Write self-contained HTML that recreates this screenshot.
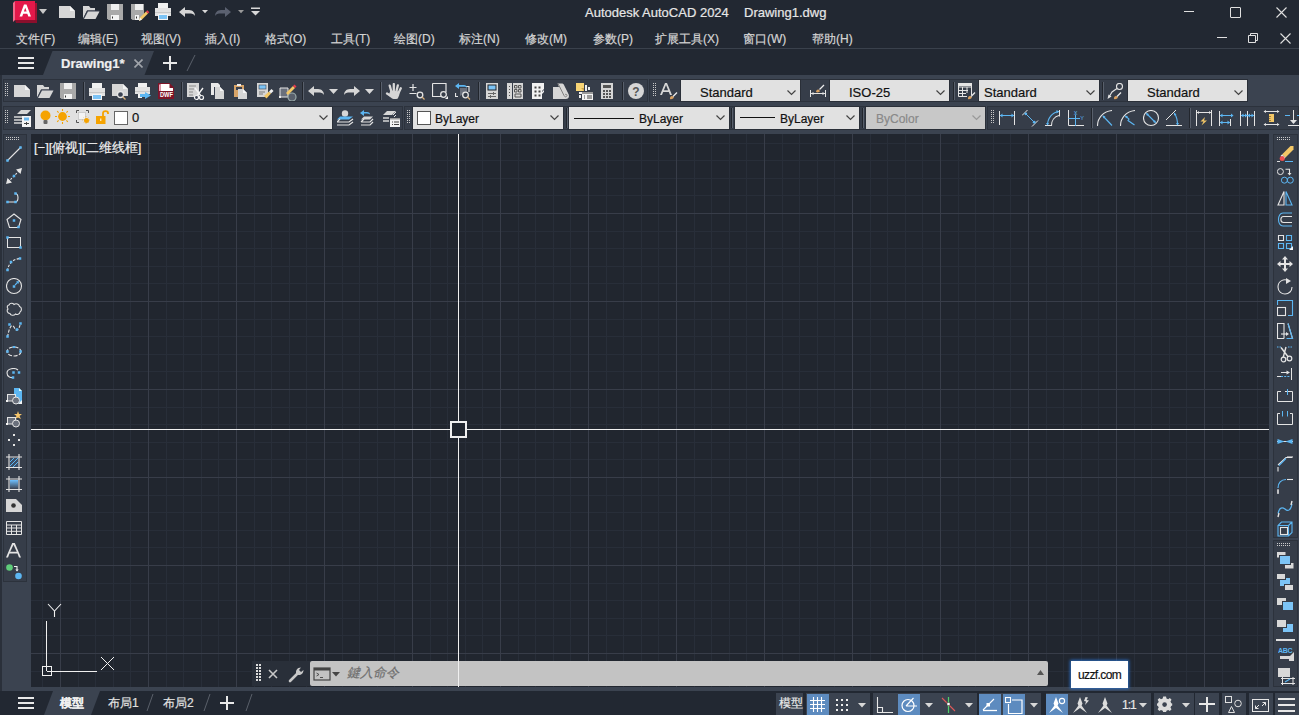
<!DOCTYPE html><html><head><meta charset="utf-8"><style>
html,body{margin:0;padding:0;width:1299px;height:715px;overflow:hidden;background:#222832;font-family:"Liberation Sans",sans-serif}
body>div,body>span,body>svg{position:absolute;display:block}
span{white-space:nowrap;line-height:1.15;-webkit-text-stroke:0.2px currentColor}
</style></head><body>
<svg style="left:12px;top:0px;" width="30" height="26" viewBox="0 0 30 26"><path d="M1 3 L3 1 L3 20 L1 22Z" fill="#f06a8a"/><rect x="3" y="1" width="20" height="19" fill="#e4184a"/><path d="M3 20 L23 20 L25 18 L25 23 L4 23Z" fill="#8a0f2c"/><rect x="23" y="3" width="2" height="17" fill="#9e1232"/><path d="M7.5 16.5 L12 4.5 L14.5 4.5 L19 16.5 L16.3 16.5 L15.3 13.8 L11.2 13.8 L10.2 16.5Z M11.9 11.6 L14.6 11.6 L13.25 7.8Z" fill="#fff"/></svg>
<svg style="left:39px;top:9px;" width="10" height="6" viewBox="0 0 10 6"><path d="M0 0 L8 0 L4 5Z" fill="#c8c8c8"/></svg>
<span style="left:585px;top:6px;font-size:13px;color:#e6e6e6;">Autodesk AutoCAD 2024</span>
<span style="left:744px;top:6px;font-size:13px;color:#e6e6e6;">Drawing1.dwg</span>
<div style="left:1184px;top:11px;width:10px;height:1px;background:#e0e0e0;"></div>
<div style="left:1230px;top:7px;width:11px;height:11px;background:transparent;border:1px solid #e0e0e0;box-sizing:border-box;border-radius:1px"></div>
<svg style="left:1276px;top:7px;" width="11" height="11" viewBox="0 0 11 11"><path d="M0.5 0.5 L10.5 10.5 M10.5 0.5 L0.5 10.5" stroke="#e0e0e0" stroke-width="1.1"/></svg>
<span style="left:16px;top:33px;font-size:12px;color:#d4d4d4;">文件(F)</span>
<span style="left:78px;top:33px;font-size:12px;color:#d4d4d4;">编辑(E)</span>
<span style="left:141px;top:33px;font-size:12px;color:#d4d4d4;">视图(V)</span>
<span style="left:205px;top:33px;font-size:12px;color:#d4d4d4;">插入(I)</span>
<span style="left:265px;top:33px;font-size:12px;color:#d4d4d4;">格式(O)</span>
<span style="left:331px;top:33px;font-size:12px;color:#d4d4d4;">工具(T)</span>
<span style="left:394px;top:33px;font-size:12px;color:#d4d4d4;">绘图(D)</span>
<span style="left:459px;top:33px;font-size:12px;color:#d4d4d4;">标注(N)</span>
<span style="left:525px;top:33px;font-size:12px;color:#d4d4d4;">修改(M)</span>
<span style="left:593px;top:33px;font-size:12px;color:#d4d4d4;">参数(P)</span>
<span style="left:655px;top:33px;font-size:12px;color:#d4d4d4;">扩展工具(X)</span>
<span style="left:743px;top:33px;font-size:12px;color:#d4d4d4;">窗口(W)</span>
<span style="left:812px;top:33px;font-size:12px;color:#d4d4d4;">帮助(H)</span>
<div style="left:1217px;top:37px;width:10px;height:1px;background:#e0e0e0;"></div>
<svg style="left:1246px;top:32px;" width="12" height="12" viewBox="0 0 12 12"><path d="M2.5 3.5 h7 v7 h-7z M4.5 3.5 v-2 h7 v7 h-2" fill="none" stroke="#e0e0e0" stroke-width="1"/></svg>
<svg style="left:1280px;top:33px;" width="11" height="11" viewBox="0 0 11 11"><path d="M0.5 0.5 L10.5 10.5 M10.5 0.5 L0.5 10.5" stroke="#e0e0e0" stroke-width="1.1"/></svg>
<div style="left:0px;top:48px;width:1299px;height:1px;background:#3a414c;"></div>
<div style="left:18px;top:57px;width:16px;height:2px;background:#e8e8e8;"></div>
<div style="left:18px;top:62px;width:16px;height:2px;background:#e8e8e8;"></div>
<div style="left:18px;top:67px;width:16px;height:2px;background:#e8e8e8;"></div>
<svg style="left:0px;top:49px;" width="1299" height="27" viewBox="0 0 1299 27"><path d="M43 26 L52.5 2 L154 2 L144.5 26Z" fill="#3b4350"/></svg>
<span style="left:61px;top:57px;font-size:13px;color:#f0f0f0;font-weight:bold">Drawing1*</span>
<svg style="left:134px;top:59px;" width="9" height="9" viewBox="0 0 9 9"><path d="M0.5 0.5 L8.5 8.5 M8.5 0.5 L0.5 8.5" stroke="#a0a4aa" stroke-width="1.6"/></svg>
<div style="left:163px;top:62px;width:14px;height:2px;background:#e8e8e8;"></div>
<div style="left:169px;top:56px;width:2px;height:14px;background:#e8e8e8;"></div>
<svg style="left:186px;top:54px;" width="10" height="18" viewBox="0 0 10 18"><path d="M1 17 L9 1" stroke="#5a606a" stroke-width="1"/></svg>
<div style="left:0px;top:75px;width:1299px;height:59px;background:#3b4350;"></div>
<div style="left:0px;top:75px;width:2px;height:640px;background:#2a303a;"></div>
<div style="left:3px;top:79px;width:645px;height:23px;background:#363d49;border:1px solid #2c323c;box-sizing:border-box"></div>
<div style="left:649px;top:79px;width:599px;height:23px;background:#363d49;border:1px solid #2c323c;box-sizing:border-box"></div>
<div style="left:3px;top:106px;width:400px;height:24px;background:#363d49;border:1px solid #2c323c;box-sizing:border-box"></div>
<div style="left:404px;top:106px;width:582px;height:24px;background:#363d49;border:1px solid #2c323c;box-sizing:border-box"></div>
<div style="left:987px;top:106px;width:312px;height:24px;background:#363d49;border:1px solid #2c323c;box-sizing:border-box"></div>
<div style="left:680px;top:79px;width:121px;height:23px;background:#e1e1e1;border:1px solid #2a2f38;box-sizing:border-box"></div>
<span style="left:700px;top:86px;font-size:13px;color:#111;">Standard</span>
<svg style="left:787px;top:90px;" width="10" height="6" viewBox="0 0 10 6"><path d="M0.5 0.5 L4.5 4.5 L8.5 0.5" fill="none" stroke="#444" stroke-width="1.2"/></svg>
<div style="left:829px;top:79px;width:121px;height:23px;background:#e1e1e1;border:1px solid #2a2f38;box-sizing:border-box"></div>
<span style="left:849px;top:86px;font-size:13px;color:#111;">ISO-25</span>
<svg style="left:936px;top:90px;" width="10" height="6" viewBox="0 0 10 6"><path d="M0.5 0.5 L4.5 4.5 L8.5 0.5" fill="none" stroke="#444" stroke-width="1.2"/></svg>
<div style="left:978px;top:79px;width:122px;height:23px;background:#e1e1e1;border:1px solid #2a2f38;box-sizing:border-box"></div>
<span style="left:984px;top:86px;font-size:13px;color:#111;">Standard</span>
<svg style="left:1086px;top:90px;" width="10" height="6" viewBox="0 0 10 6"><path d="M0.5 0.5 L4.5 4.5 L8.5 0.5" fill="none" stroke="#444" stroke-width="1.2"/></svg>
<div style="left:1127px;top:79px;width:121px;height:23px;background:#e1e1e1;border:1px solid #2a2f38;box-sizing:border-box"></div>
<span style="left:1147px;top:86px;font-size:13px;color:#111;">Standard</span>
<svg style="left:1234px;top:90px;" width="10" height="6" viewBox="0 0 10 6"><path d="M0.5 0.5 L4.5 4.5 L8.5 0.5" fill="none" stroke="#444" stroke-width="1.2"/></svg>
<div style="left:34px;top:106px;width:299px;height:24px;background:#e1e1e1;border:1px solid #2a2f38;box-sizing:border-box"></div>
<svg style="left:319px;top:115px;" width="10" height="6" viewBox="0 0 10 6"><path d="M0.5 0.5 L4.5 4.5 L8.5 0.5" fill="none" stroke="#444" stroke-width="1.2"/></svg>
<span style="left:132px;top:111px;font-size:13px;color:#111;">0</span>
<div style="left:114px;top:111px;width:14px;height:14px;background:#fff;border:1px solid #666;box-sizing:border-box"></div>
<div style="left:412px;top:106px;width:152px;height:24px;background:#e1e1e1;border:1px solid #2a2f38;box-sizing:border-box"></div>
<span style="left:435px;top:113px;font-size:12px;color:#111;">ByLayer</span>
<svg style="left:550px;top:115px;" width="10" height="6" viewBox="0 0 10 6"><path d="M0.5 0.5 L4.5 4.5 L8.5 0.5" fill="none" stroke="#444" stroke-width="1.2"/></svg>
<div style="left:417px;top:111px;width:14px;height:14px;background:#fff;border:1px solid #555;box-sizing:border-box"></div>
<div style="left:568px;top:106px;width:162px;height:24px;background:#e1e1e1;border:1px solid #2a2f38;box-sizing:border-box"></div>
<span style="left:639px;top:113px;font-size:12px;color:#111;">ByLayer</span>
<svg style="left:716px;top:115px;" width="10" height="6" viewBox="0 0 10 6"><path d="M0.5 0.5 L4.5 4.5 L8.5 0.5" fill="none" stroke="#444" stroke-width="1.2"/></svg>
<div style="left:574px;top:118px;width:60px;height:1px;background:#111;"></div>
<div style="left:734px;top:106px;width:126px;height:24px;background:#e1e1e1;border:1px solid #2a2f38;box-sizing:border-box"></div>
<span style="left:780px;top:113px;font-size:12px;color:#111;">ByLayer</span>
<svg style="left:846px;top:115px;" width="10" height="6" viewBox="0 0 10 6"><path d="M0.5 0.5 L4.5 4.5 L8.5 0.5" fill="none" stroke="#444" stroke-width="1.2"/></svg>
<div style="left:740px;top:117px;width:35px;height:1px;background:#111;"></div>
<div style="left:865px;top:106px;width:121px;height:24px;background:#c8c8c8;border:1px solid #2a2f38;box-sizing:border-box"></div>
<span style="left:876px;top:113px;font-size:12px;color:#888;">ByColor</span>
<svg style="left:972px;top:115px;" width="10" height="6" viewBox="0 0 10 6"><path d="M0.5 0.5 L4.5 4.5 L8.5 0.5" fill="none" stroke="#999" stroke-width="1.2"/></svg>
<div style="left:2px;top:134px;width:29px;height:556px;background:#3b4350;"></div>
<div style="left:1269px;top:134px;width:30px;height:556px;background:#3b4350;"></div>
<div style="left:2px;top:687px;width:1299px;height:4px;background:#3b4350;"></div>
<div style="left:3px;top:134px;width:24px;height:448px;background:#363d49;border:1px solid #2c323c;box-sizing:border-box"></div>
<div style="left:1273px;top:134px;width:25px;height:404px;background:#363d49;border:1px solid #2c323c;box-sizing:border-box"></div>
<div style="left:1273px;top:540px;width:25px;height:147px;background:#363d49;border:1px solid #2c323c;box-sizing:border-box"></div>
<div style="left:31px;top:134px;width:1238px;height:553px;background:#21262f;"></div>
<svg style="left:31px;top:134px;" width="1238" height="553" viewBox="0 0 1238 553"><rect x="11" y="0" width="1" height="553" fill="#282e39"/><rect x="47" y="0" width="1" height="553" fill="#282e39"/><rect x="64" y="0" width="1" height="553" fill="#282e39"/><rect x="82" y="0" width="1" height="553" fill="#282e39"/><rect x="99" y="0" width="1" height="553" fill="#282e39"/><rect x="135" y="0" width="1" height="553" fill="#282e39"/><rect x="152" y="0" width="1" height="553" fill="#282e39"/><rect x="170" y="0" width="1" height="553" fill="#282e39"/><rect x="187" y="0" width="1" height="553" fill="#282e39"/><rect x="223" y="0" width="1" height="553" fill="#282e39"/><rect x="240" y="0" width="1" height="553" fill="#282e39"/><rect x="258" y="0" width="1" height="553" fill="#282e39"/><rect x="275" y="0" width="1" height="553" fill="#282e39"/><rect x="311" y="0" width="1" height="553" fill="#282e39"/><rect x="328" y="0" width="1" height="553" fill="#282e39"/><rect x="346" y="0" width="1" height="553" fill="#282e39"/><rect x="363" y="0" width="1" height="553" fill="#282e39"/><rect x="399" y="0" width="1" height="553" fill="#282e39"/><rect x="416" y="0" width="1" height="553" fill="#282e39"/><rect x="434" y="0" width="1" height="553" fill="#282e39"/><rect x="451" y="0" width="1" height="553" fill="#282e39"/><rect x="487" y="0" width="1" height="553" fill="#282e39"/><rect x="504" y="0" width="1" height="553" fill="#282e39"/><rect x="522" y="0" width="1" height="553" fill="#282e39"/><rect x="539" y="0" width="1" height="553" fill="#282e39"/><rect x="575" y="0" width="1" height="553" fill="#282e39"/><rect x="592" y="0" width="1" height="553" fill="#282e39"/><rect x="610" y="0" width="1" height="553" fill="#282e39"/><rect x="627" y="0" width="1" height="553" fill="#282e39"/><rect x="663" y="0" width="1" height="553" fill="#282e39"/><rect x="680" y="0" width="1" height="553" fill="#282e39"/><rect x="698" y="0" width="1" height="553" fill="#282e39"/><rect x="715" y="0" width="1" height="553" fill="#282e39"/><rect x="751" y="0" width="1" height="553" fill="#282e39"/><rect x="768" y="0" width="1" height="553" fill="#282e39"/><rect x="786" y="0" width="1" height="553" fill="#282e39"/><rect x="803" y="0" width="1" height="553" fill="#282e39"/><rect x="839" y="0" width="1" height="553" fill="#282e39"/><rect x="856" y="0" width="1" height="553" fill="#282e39"/><rect x="874" y="0" width="1" height="553" fill="#282e39"/><rect x="891" y="0" width="1" height="553" fill="#282e39"/><rect x="927" y="0" width="1" height="553" fill="#282e39"/><rect x="944" y="0" width="1" height="553" fill="#282e39"/><rect x="962" y="0" width="1" height="553" fill="#282e39"/><rect x="979" y="0" width="1" height="553" fill="#282e39"/><rect x="1015" y="0" width="1" height="553" fill="#282e39"/><rect x="1032" y="0" width="1" height="553" fill="#282e39"/><rect x="1050" y="0" width="1" height="553" fill="#282e39"/><rect x="1067" y="0" width="1" height="553" fill="#282e39"/><rect x="1103" y="0" width="1" height="553" fill="#282e39"/><rect x="1120" y="0" width="1" height="553" fill="#282e39"/><rect x="1138" y="0" width="1" height="553" fill="#282e39"/><rect x="1155" y="0" width="1" height="553" fill="#282e39"/><rect x="1191" y="0" width="1" height="553" fill="#282e39"/><rect x="1208" y="0" width="1" height="553" fill="#282e39"/><rect x="1226" y="0" width="1" height="553" fill="#282e39"/><rect x="0" y="9" width="1238" height="1" fill="#282e39"/><rect x="0" y="26" width="1238" height="1" fill="#282e39"/><rect x="0" y="44" width="1238" height="1" fill="#282e39"/><rect x="0" y="61" width="1238" height="1" fill="#282e39"/><rect x="0" y="97" width="1238" height="1" fill="#282e39"/><rect x="0" y="114" width="1238" height="1" fill="#282e39"/><rect x="0" y="132" width="1238" height="1" fill="#282e39"/><rect x="0" y="149" width="1238" height="1" fill="#282e39"/><rect x="0" y="185" width="1238" height="1" fill="#282e39"/><rect x="0" y="202" width="1238" height="1" fill="#282e39"/><rect x="0" y="220" width="1238" height="1" fill="#282e39"/><rect x="0" y="237" width="1238" height="1" fill="#282e39"/><rect x="0" y="273" width="1238" height="1" fill="#282e39"/><rect x="0" y="290" width="1238" height="1" fill="#282e39"/><rect x="0" y="308" width="1238" height="1" fill="#282e39"/><rect x="0" y="325" width="1238" height="1" fill="#282e39"/><rect x="0" y="361" width="1238" height="1" fill="#282e39"/><rect x="0" y="378" width="1238" height="1" fill="#282e39"/><rect x="0" y="396" width="1238" height="1" fill="#282e39"/><rect x="0" y="413" width="1238" height="1" fill="#282e39"/><rect x="0" y="449" width="1238" height="1" fill="#282e39"/><rect x="0" y="466" width="1238" height="1" fill="#282e39"/><rect x="0" y="484" width="1238" height="1" fill="#282e39"/><rect x="0" y="501" width="1238" height="1" fill="#282e39"/><rect x="0" y="537" width="1238" height="1" fill="#282e39"/><rect x="29" y="0" width="1" height="553" fill="#383d49"/><rect x="117" y="0" width="1" height="553" fill="#383d49"/><rect x="205" y="0" width="1" height="553" fill="#383d49"/><rect x="293" y="0" width="1" height="553" fill="#383d49"/><rect x="381" y="0" width="1" height="553" fill="#383d49"/><rect x="469" y="0" width="1" height="553" fill="#383d49"/><rect x="557" y="0" width="1" height="553" fill="#383d49"/><rect x="645" y="0" width="1" height="553" fill="#383d49"/><rect x="733" y="0" width="1" height="553" fill="#383d49"/><rect x="821" y="0" width="1" height="553" fill="#383d49"/><rect x="909" y="0" width="1" height="553" fill="#383d49"/><rect x="997" y="0" width="1" height="553" fill="#383d49"/><rect x="1085" y="0" width="1" height="553" fill="#383d49"/><rect x="1173" y="0" width="1" height="553" fill="#383d49"/><rect x="0" y="79" width="1238" height="1" fill="#383d49"/><rect x="0" y="167" width="1238" height="1" fill="#383d49"/><rect x="0" y="255" width="1238" height="1" fill="#383d49"/><rect x="0" y="343" width="1238" height="1" fill="#383d49"/><rect x="0" y="431" width="1238" height="1" fill="#383d49"/><rect x="0" y="519" width="1238" height="1" fill="#383d49"/></svg>
<span style="left:34px;top:141px;font-size:13px;color:#f0f0f0;">[−][俯视][二维线框]</span>
<div style="left:46px;top:621px;width:1px;height:50px;background:#f0f0f0;"></div>
<div style="left:47px;top:671px;width:50px;height:1px;background:#f0f0f0;"></div>
<div style="left:42px;top:666px;width:10px;height:10px;background:transparent;border:1px solid #f0f0f0;box-sizing:border-box"></div>
<svg style="left:47px;top:603px;" width="15" height="15" viewBox="0 0 15 15"><path d="M1 1 L7.5 8 L14 1 M7.5 8 V14" fill="none" stroke="#f0f0f0" stroke-width="1.1"/></svg>
<svg style="left:100px;top:656px;" width="15" height="15" viewBox="0 0 15 15"><path d="M1 1 L14 14 M14 1 L1 14" fill="none" stroke="#f0f0f0" stroke-width="1"/></svg>
<div style="left:252px;top:661px;width:58px;height:25px;background:#292f39;"></div>
<div style="left:310px;top:661px;width:738px;height:25px;background:#c3c3c3;border-radius:2px"></div>
<span style="left:347px;top:666px;font-size:13px;color:#707070;font-style:italic">鍵入命令</span>
<svg style="left:255px;top:663px;" width="7" height="19" viewBox="0 0 7 19"><rect x="1" y="1" width="2" height="2" fill="#dcdcdc"/><rect x="1" y="4" width="2" height="2" fill="#dcdcdc"/><rect x="1" y="7" width="2" height="2" fill="#dcdcdc"/><rect x="1" y="10" width="2" height="2" fill="#dcdcdc"/><rect x="1" y="13" width="2" height="2" fill="#dcdcdc"/><rect x="1" y="16" width="2" height="2" fill="#dcdcdc"/><rect x="4" y="1" width="2" height="2" fill="#dcdcdc"/><rect x="4" y="4" width="2" height="2" fill="#dcdcdc"/><rect x="4" y="7" width="2" height="2" fill="#dcdcdc"/><rect x="4" y="10" width="2" height="2" fill="#dcdcdc"/><rect x="4" y="13" width="2" height="2" fill="#dcdcdc"/><rect x="4" y="16" width="2" height="2" fill="#dcdcdc"/></svg>
<svg style="left:268px;top:669px;" width="10" height="10" viewBox="0 0 10 10"><path d="M1 1 L9 9 M9 1 L1 9" stroke="#c8c8c8" stroke-width="1.6"/></svg>
<svg style="left:288px;top:666px;" width="17" height="17" viewBox="0 0 17 17"><path d="M2 15 L10 7" stroke="#c8c8c8" stroke-width="2.6" stroke-linecap="round"/><path d="M8.5 8.5 C7 5 9 1.5 13 1.5 L11 4 L13 6 L15.5 4 C15.5 8 12 10 8.5 8.5Z" fill="#c8c8c8"/></svg>
<svg style="left:313px;top:667px;" width="19" height="14" viewBox="0 0 19 14"><rect x="1" y="1" width="16" height="12" fill="none" stroke="#444" stroke-width="1.2"/><rect x="1" y="1" width="16" height="2.5" fill="#444"/><path d="M3.5 6 L6 7.5 L3.5 9 M7 10.5 H10" fill="none" stroke="#444" stroke-width="0.9"/></svg>
<svg style="left:332px;top:672px;" width="9" height="5" viewBox="0 0 9 5"><path d="M0 0 H8 L4 4.5Z" fill="#444"/></svg>
<svg style="left:1037px;top:670px;" width="8" height="6" viewBox="0 0 8 6"><path d="M0 5 L7 5 L3.5 0Z" fill="#555"/></svg>
<div style="left:1071px;top:661px;width:57px;height:27px;background:#fff;box-shadow:0 0 3px 1px #2a6cc0"></div>
<span style="left:1078px;top:669px;font-size:12px;color:#111;letter-spacing:-0.6px">uzzf.com</span>
<div style="left:0px;top:691px;width:1299px;height:24px;background:#222832;"></div>
<div style="left:18px;top:697px;width:16px;height:2px;background:#e8e8e8;"></div>
<div style="left:18px;top:702px;width:16px;height:2px;background:#e8e8e8;"></div>
<div style="left:18px;top:707px;width:16px;height:2px;background:#e8e8e8;"></div>
<svg style="left:0px;top:691px;" width="1299" height="24" viewBox="0 0 1299 24"><path d="M44 24 L53 0 L100 0 L91 24Z" fill="#3b4350"/></svg>
<span style="left:60px;top:697px;font-size:12px;color:#f0f0f0;font-weight:bold">模型</span>
<span style="left:108px;top:697px;font-size:12px;color:#e0e0e0;">布局1</span>
<span style="left:163px;top:697px;font-size:12px;color:#e0e0e0;">布局2</span>
<div style="left:220px;top:702px;width:14px;height:2px;background:#e8e8e8;"></div>
<div style="left:226px;top:696px;width:2px;height:14px;background:#e8e8e8;"></div>
<svg style="left:146px;top:693px;" width="8" height="19" viewBox="0 0 8 19"><path d="M1 18 L7 1" stroke="#5a606a" stroke-width="1"/></svg>
<svg style="left:203px;top:693px;" width="8" height="19" viewBox="0 0 8 19"><path d="M1 18 L7 1" stroke="#5a606a" stroke-width="1"/></svg>
<svg style="left:245px;top:693px;" width="8" height="19" viewBox="0 0 8 19"><path d="M1 18 L7 1" stroke="#5a606a" stroke-width="1"/></svg>
<div style="left:776px;top:693px;width:27px;height:22px;background:#3b4350;"></div>
<div style="left:806px;top:693px;width:64px;height:22px;background:#3b4350;"></div>
<div style="left:873px;top:693px;width:104px;height:22px;background:#3b4350;"></div>
<div style="left:979px;top:693px;width:62px;height:22px;background:#3b4350;"></div>
<div style="left:1046px;top:693px;width:105px;height:22px;background:#3b4350;"></div>
<div style="left:1154px;top:693px;width:40px;height:22px;background:#3b4350;"></div>
<div style="left:1195px;top:693px;width:24px;height:22px;background:#3b4350;"></div>
<div style="left:1222px;top:693px;width:24px;height:22px;background:#3b4350;"></div>
<div style="left:1249px;top:693px;width:24px;height:22px;background:#3b4350;"></div>
<div style="left:1275px;top:693px;width:24px;height:22px;background:#3b4350;"></div>
<div style="left:807px;top:694px;width:22px;height:21px;background:#5d8bbf;"></div>
<div style="left:898px;top:694px;width:22px;height:21px;background:#5d8bbf;"></div>
<div style="left:979px;top:694px;width:22px;height:21px;background:#5d8bbf;"></div>
<div style="left:1003px;top:694px;width:22px;height:21px;background:#5d8bbf;"></div>
<div style="left:1046px;top:694px;width:22px;height:21px;background:#5d8bbf;"></div>
<span style="left:779px;top:697px;font-size:12px;color:#e8e8e8;">模型</span>
<svg style="left:809px;top:696px;" width="18" height="17" viewBox="0 0 18 17"><path d="M4.5 1 V16 M8.5 1 V16 M12.5 1 V16 M1 4.5 H16 M1 8.5 H16 M1 12.5 H16" stroke="#fff" stroke-width="1.1"/></svg>
<svg style="left:835px;top:698px;" width="16" height="16" viewBox="0 0 16 16"><rect x="1" y="1" width="2" height="2" fill="#eee"/><rect x="1" y="6" width="2" height="2" fill="#eee"/><rect x="1" y="11" width="2" height="2" fill="#eee"/><rect x="6" y="1" width="2" height="2" fill="#eee"/><rect x="6" y="6" width="2" height="2" fill="#eee"/><rect x="6" y="11" width="2" height="2" fill="#eee"/><rect x="11" y="1" width="2" height="2" fill="#eee"/><rect x="11" y="6" width="2" height="2" fill="#eee"/><rect x="11" y="11" width="2" height="2" fill="#eee"/></svg>
<svg style="left:858px;top:703px;" width="9" height="5" viewBox="0 0 9 5"><path d="M0 0 H8 L4 4.5Z" fill="#d8d8d8"/></svg>
<svg style="left:876px;top:696px;" width="18" height="18" viewBox="0 0 18 18"><path d="M1.5 1 V16.5 H17 M1.5 11.5 H6.5 V16.5" fill="none" stroke="#e8e8e8" stroke-width="1.1"/></svg>
<svg style="left:900px;top:696px;" width="18" height="18" viewBox="0 0 18 18"><circle cx="8" cy="9.5" r="6" fill="none" stroke="#fff" stroke-width="1.2"/><path d="M6 10 H17 M6 10 L13.5 2" stroke="#fff" stroke-width="1.1"/></svg>
<svg style="left:925px;top:703px;" width="9" height="5" viewBox="0 0 9 5"><path d="M0 0 H8 L4 4.5Z" fill="#d8d8d8"/></svg>
<svg style="left:940px;top:696px;" width="17" height="18" viewBox="0 0 17 18"><path d="M8.5 1 V17" stroke="#4fd06a" stroke-width="1.2"/><path d="M2 2 L15 15" stroke="#e05a5a" stroke-width="1.1"/><rect x="7" y="6.5" width="3" height="3" fill="#fff" stroke="#333" stroke-width="0.5"/></svg>
<svg style="left:965px;top:703px;" width="9" height="5" viewBox="0 0 9 5"><path d="M0 0 H8 L4 4.5Z" fill="#d8d8d8"/></svg>
<svg style="left:981px;top:697px;" width="18" height="16" viewBox="0 0 18 16"><path d="M2 13 L13 2" stroke="#fff" stroke-width="1.1"/><path d="M2 13.5 H16" stroke="#fff" stroke-width="1.3"/><rect x="5.5" y="6" width="3.5" height="3.5" fill="#fff"/></svg>
<svg style="left:1005px;top:697px;" width="18" height="17" viewBox="0 0 18 17"><rect x="0.5" y="0.5" width="5" height="5" fill="none" stroke="#fff" stroke-width="1.1"/><path d="M7 3 H17 V16.5 H3.5 V7" fill="none" stroke="#fff" stroke-width="1.2"/></svg>
<svg style="left:1030px;top:703px;" width="9" height="5" viewBox="0 0 9 5"><path d="M0 0 H8 L4 4.5Z" fill="#d8d8d8"/></svg>
<svg style="left:1049px;top:697px;" width="20" height="17" viewBox="0 0 20 17"><path d="M7 0 L9.5 6.5 L8.6 8.5 L14 16 L7 11 L0 16 L5.4 8.5 L4.5 6.5Z" fill="#fff"/><circle cx="13" cy="4" r="2.6" fill="none" stroke="#fff" stroke-width="1.1"/></svg>
<svg style="left:1073px;top:697px;" width="20" height="17" viewBox="0 0 20 17"><path d="M7 0 L9.5 6.5 L8.6 8.5 L14 16 L7 11 L0 16 L5.4 8.5 L4.5 6.5Z" fill="#dcdcdc"/><path d="M12.5 0 L15 0.5 L13.5 3 L16 3.5 L12 8 L13 4.5 L11 4Z" fill="#dcdcdc"/></svg>
<svg style="left:1098px;top:697px;" width="18" height="17" viewBox="0 0 18 17"><path d="M7 0 L9.5 6.5 L8.6 8.5 L14 16 L7 11 L0 16 L5.4 8.5 L4.5 6.5Z" fill="#dcdcdc"/></svg>
<span style="left:1122px;top:699px;font-size:12px;color:#e8e8e8;letter-spacing:-1px">1:1</span>
<svg style="left:1139px;top:703px;" width="9" height="5" viewBox="0 0 9 5"><path d="M0 0 H8 L4 4.5Z" fill="#d8d8d8"/></svg>
<svg style="left:1157px;top:696px;" width="16" height="16" viewBox="0 0 16 16"><path d="M6.5 0.5 H9.5 L10 2.5 L11.8 3.3 L13.5 2.2 L15.3 4 L14.2 5.8 L15 7.6 L16 8 V10 L14.9 10.5 L14.2 12.2 L15.3 14 L13.5 15.8 L11.8 14.7 L10 15.5 L9.5 17 H6.5 L6 15.5 L4.2 14.7 L2.5 15.8 L0.7 14 L1.8 12.2 L1 10.5 L0 10 V8 L1 7.6 L1.8 5.8 L0.7 4 L2.5 2.2 L4.2 3.3 L6 2.5Z" transform="scale(0.95)" fill="#dcdcdc"/><circle cx="7.6" cy="8.6" r="2.3" fill="#3b4350"/></svg>
<svg style="left:1182px;top:703px;" width="9" height="5" viewBox="0 0 9 5"><path d="M0 0 H8 L4 4.5Z" fill="#d8d8d8"/></svg>
<div style="left:1199px;top:703px;width:16px;height:2px;background:#e8e8e8;"></div>
<div style="left:1206px;top:697px;width:2px;height:15px;background:#e8e8e8;"></div>
<svg style="left:1225px;top:696px;" width="20" height="18" viewBox="0 0 20 18"><rect x="0.5" y="0.5" width="6" height="6" fill="none" stroke="#e0e0e0" stroke-width="1"/><circle cx="13" cy="7.5" r="3.3" fill="none" stroke="#e0e0e0" stroke-width="1"/><path d="M3.5 16.5 L6.5 10.5 L9.5 16.5Z" fill="none" stroke="#e0e0e0" stroke-width="1"/></svg>
<svg style="left:1252px;top:699px;" width="18" height="14" viewBox="0 0 18 14"><rect x="0.5" y="0.5" width="16" height="12" fill="none" stroke="#e6e6e6" stroke-width="1"/><path d="M3.5 9.5 L7 6 M13.5 3.5 L10 7" stroke="#e6e6e6" stroke-width="1"/><path d="M3.5 9.5 V6.5 M3.5 9.5 H6.5 M13.5 3.5 V6.5 M13.5 3.5 H10.5" stroke="#e6e6e6" stroke-width="1"/></svg>
<div style="left:1278px;top:698px;width:17px;height:2px;background:#e8e8e8;"></div>
<div style="left:1278px;top:704px;width:17px;height:2px;background:#e8e8e8;"></div>
<div style="left:1278px;top:710px;width:17px;height:2px;background:#e8e8e8;"></div>
<svg style="left:59px;top:5px;" width="18" height="18" viewBox="0 0 18 18"><path d="M0 1 H11 L16 6 V13 H0Z" fill="#d6d6d6"/><path d="M11 1 L16 6 H11Z" fill="#f4f4f4"/></svg>
<svg style="left:83px;top:6px;" width="18" height="18" viewBox="0 0 18 18"><path d="M0 0 H6 L7.5 2 H12 V4.5 H4 L0 12.5Z" fill="#d6d6d6"/><path d="M4.2 4.5 H16.5 L12.3 13 H0Z" fill="#3a4150"/><path d="M5 5.5 H16.5 L12.5 13 H1Z" fill="#d6d6d6"/></svg>
<svg style="left:107px;top:4px;" width="17" height="17" viewBox="0 0 17 17"><path d="M0 0 H16 V16 H1.5 L0 14.5Z" fill="#a9a9a9"/><rect x="4" y="0" width="8" height="6" fill="#efefef"/><rect x="4" y="11" width="8" height="5" fill="#f4f4f4"/><rect x="5" y="12.5" width="1" height="2" fill="#333"/></svg>
<svg style="left:131px;top:4px;" width="19" height="19" viewBox="0 0 19 19"><path d="M0 0 H13 V10 L9 16 H1.5 L0 14.5Z" fill="#a9a9a9"/><rect x="4" y="0" width="8" height="6" fill="#efefef"/><rect x="4" y="11" width="4" height="5" fill="#f4f4f4"/><rect x="5" y="12.5" width="1" height="2" fill="#333"/><path d="M8 17 L9 13.5 L15 7.5 L17 9.5 L11 15.5Z" fill="#f3c766"/><path d="M15 7.5 L16.3 6.2 L18.3 8.2 L17 9.5Z" fill="#e8394d"/><path d="M8 17 L9 13.5 L11 15.5Z" fill="#f4f4f4"/></svg>
<svg style="left:155px;top:3px;" width="17" height="18" viewBox="0 0 17 18"><rect x="3" y="0" width="10" height="5" fill="#f0f0f0"/><path d="M0 5 H16 V13 H13 V11 H3 V13 H0Z" fill="#e2e2e2"/><rect x="0" y="9" width="16" height="1" fill="#c8c8c8"/><rect x="3" y="11" width="10" height="6" fill="#f4f4f4"/><rect x="4" y="12" width="8" height="4" fill="#7cc3f5"/></svg>
<svg style="left:179px;top:7px;" width="17" height="11" viewBox="0 0 17 11"><path d="M0 5 L6 0 V3 H10 C14 3 16 6 16 9 C15 7 13 6.5 10 6.5 H6 V10Z" fill="#d6d6d6"/></svg>
<svg style="left:202px;top:10px;" width="9" height="5" viewBox="0 0 9 5"><path d="M0 0 H6 L3.0 3.3000000000000003Z" fill="#d8d8d8"/></svg>
<svg style="left:215px;top:7px;" width="17" height="11" viewBox="0 0 17 11"><path d="M16 5 L10 0 V3 H6 C2 3 0 6 0 9 C1 7 3 6.5 6 6.5 H10 V10Z" fill="#5b6170"/></svg>
<svg style="left:238px;top:10px;" width="9" height="5" viewBox="0 0 9 5"><path d="M0 0 H6 L3.0 3.3000000000000003Z" fill="#9a9a9a"/></svg>
<svg style="left:251px;top:7px;" width="9" height="9" viewBox="0 0 9 9"><rect x="0" y="0.5" width="9" height="1.5" fill="#d8d8d8"/><path d="M0 4 H9 L4.5 8.5Z" fill="#d8d8d8"/></svg>
<svg style="left:5px;top:83px;" width="3" height="14" viewBox="0 0 3 14"><rect x="0" y="0" width="1" height="1" fill="#c9c9c9"/><rect x="2" y="0" width="1" height="1" fill="#c9c9c9"/><rect x="0" y="2" width="1" height="1" fill="#c9c9c9"/><rect x="2" y="2" width="1" height="1" fill="#c9c9c9"/><rect x="0" y="4" width="1" height="1" fill="#c9c9c9"/><rect x="2" y="4" width="1" height="1" fill="#c9c9c9"/><rect x="0" y="6" width="1" height="1" fill="#c9c9c9"/><rect x="2" y="6" width="1" height="1" fill="#c9c9c9"/><rect x="0" y="8" width="1" height="1" fill="#c9c9c9"/><rect x="2" y="8" width="1" height="1" fill="#c9c9c9"/><rect x="0" y="10" width="1" height="1" fill="#c9c9c9"/><rect x="2" y="10" width="1" height="1" fill="#c9c9c9"/><rect x="0" y="12" width="1" height="1" fill="#c9c9c9"/><rect x="2" y="12" width="1" height="1" fill="#c9c9c9"/></svg>
<svg style="left:14px;top:84px;" width="17" height="15" viewBox="0 0 17 15"><path d="M0 1 H11 L16 6 V13 H0Z" fill="#d6d6d6"/><path d="M11 1 L16 6 H11Z" fill="#f4f4f4"/></svg>
<svg style="left:37px;top:85px;" width="18" height="18" viewBox="0 0 18 18"><path d="M0 0 H6 L7.5 2 H12 V4.5 H4 L0 12.5Z" fill="#d6d6d6"/><path d="M4.2 4.5 H16.5 L12.3 13 H0Z" fill="#3a4150"/><path d="M5 5.5 H16.5 L12.5 13 H1Z" fill="#d6d6d6"/></svg>
<svg style="left:60px;top:83px;" width="18" height="18" viewBox="0 0 18 18"><path d="M0 0 H16 V16 H1.5 L0 14.5Z" fill="#a9a9a9"/><rect x="4" y="0" width="8" height="6" fill="#efefef"/><rect x="4" y="11" width="8" height="5" fill="#f4f4f4"/><rect x="5" y="12.5" width="1" height="2" fill="#333"/></svg>
<svg style="left:83px;top:82px;" width="2" height="18" viewBox="0 0 2 18"><rect x="0" y="0" width="1" height="18" fill="#22262d"/><rect x="1" y="0" width="1" height="18" fill="#59606c"/></svg>
<svg style="left:89px;top:83px;" width="18" height="18" viewBox="0 0 18 18"><rect x="3" y="0" width="10" height="5" fill="#f0f0f0"/><path d="M0 5 H16 V13 H13 V11 H3 V13 H0Z" fill="#e2e2e2"/><rect x="0" y="9" width="16" height="1" fill="#c8c8c8"/><rect x="3" y="11" width="10" height="6" fill="#f4f4f4"/><rect x="4" y="12" width="8" height="4" fill="#7cc3f5"/></svg>
<svg style="left:112px;top:83px;" width="18" height="18" viewBox="0 0 18 18"><path d="M0 1 H11 L16 6 V13 H0Z" fill="#d6d6d6"/><path d="M11 1 L16 6 H11Z" fill="#f4f4f4"/><circle cx="8.5" cy="11.5" r="3" fill="#3a4150" stroke="#e4e4e4" stroke-width="1.3"/><path d="M10.7 13.7 L13.5 16.5" stroke="#d9b07a" stroke-width="1.3"/></svg>
<svg style="left:135px;top:83px;" width="18" height="18" viewBox="0 0 18 18"><rect x="3" y="0" width="9" height="4" fill="#f0f0f0"/><path d="M0 4 H15 V11 H0Z" fill="#e2e2e2"/><rect x="0" y="8" width="15" height="1" fill="#c8c8c8"/><rect x="3" y="11" width="4" height="4" fill="#f4f4f4"/><path d="M5 11 H10 V9 L16 12.5 L10 16 V14 H5Z" fill="#5cb6f2"/></svg>
<svg style="left:158px;top:83px;" width="18" height="18" viewBox="0 0 18 18"><path d="M0 0 H11.5 L16 4.5 V16 H0Z" fill="#7d1427"/><path d="M2.5 1 H11.5 V5 H15 V8 H2.5Z" fill="#fff"/><rect x="1" y="1.5" width="1.5" height="6.5" fill="#f2a3b9"/><text x="2" y="14" font-size="6.4" font-weight="bold" fill="#fff" font-family="Liberation Sans" textLength="13" lengthAdjust="spacingAndGlyphs">DWF</text></svg>
<svg style="left:181px;top:82px;" width="2" height="18" viewBox="0 0 2 18"><rect x="0" y="0" width="1" height="18" fill="#22262d"/><rect x="1" y="0" width="1" height="18" fill="#59606c"/></svg>
<svg style="left:187px;top:83px;" width="18" height="18" viewBox="0 0 18 18"><rect x="0" y="0" width="12" height="14" fill="#d6d6d6"/><path d="M2 3 H9 M2 6 H7 M2 9 H6 M2 12 H6" stroke="#8a8a8a" stroke-width="1"/><path d="M8 5 L14 13 M16 5 L10 13" stroke="#f4f4f4" stroke-width="1.4"/><circle cx="9.5" cy="14.5" r="2" fill="#3a4150" stroke="#f4f4f4" stroke-width="1.2"/><circle cx="14.5" cy="14.5" r="2" fill="#3a4150" stroke="#f4f4f4" stroke-width="1.2"/></svg>
<svg style="left:211px;top:83px;" width="18" height="18" viewBox="0 0 18 18"><path d="M0 0 H7 L9 2 V12 H0Z" fill="#e9e9e9"/><path d="M3 4 H9 L13 8 V16 H3Z" fill="#3a4150"/><path d="M4 4 H9 L13 8 V16 H4Z" fill="#d6d6d6"/><path d="M9 4 L13 8 H9Z" fill="#f7f7f7"/></svg>
<svg style="left:234px;top:83px;" width="18" height="18" viewBox="0 0 18 18"><rect x="0" y="2" width="10" height="12" fill="#d8a468"/><rect x="2" y="4" width="6" height="3" fill="#3a4150"/><path d="M3 1 H7 V3 H3Z" fill="#f0f0f0"/><path d="M4 6 H9 L13 10 V16 H4Z" fill="#d6d6d6"/><path d="M9 6 L13 10 H9Z" fill="#f7f7f7"/></svg>
<svg style="left:257px;top:83px;" width="18" height="18" viewBox="0 0 18 18"><rect x="0" y="0" width="11" height="14" fill="#d6d6d6"/><rect x="2" y="2" width="7" height="4" fill="#7cc3f5" stroke="#3a4150" stroke-width="0.6"/><path d="M2 9 H8 M2 11 H6" stroke="#7a7a7a"/><path d="M7 13 L12 8.5 L14 10.5 L9.5 15.5Z" fill="#f3c766"/><path d="M12 8.5 L14.5 6 L16.5 8 L14 10.5Z" fill="#f0f0f0"/></svg>
<svg style="left:279px;top:83px;" width="18" height="18" viewBox="0 0 18 18"><path d="M1 5 H9 V14 H1Z" fill="#6a707c" stroke="#e4e4e4" stroke-width="1"/><circle cx="13" cy="14" r="4" fill="#59606c" stroke="#9aa" stroke-width="1.2"/><path d="M7 10 L14 3 L16 5 L9 12Z" fill="#f3c766"/><path d="M14 3 L15.5 1.5 L17.5 3.5 L16 5Z" fill="#e8394d"/><rect x="0" y="13" width="2" height="2" fill="#f0f0f0"/></svg>
<svg style="left:302px;top:82px;" width="2" height="18" viewBox="0 0 2 18"><rect x="0" y="0" width="1" height="18" fill="#22262d"/><rect x="1" y="0" width="1" height="18" fill="#59606c"/></svg>
<svg style="left:308px;top:86px;" width="17" height="11" viewBox="0 0 17 11"><path d="M0 5 L6 0 V3 H10 C14 3 16 6 16 9 C15 7 13 6.5 10 6.5 H6 V10Z" fill="#d6d6d6"/></svg>
<svg style="left:329px;top:89px;" width="10" height="6" viewBox="0 0 10 6"><path d="M0 0 H9 L4.5 4.95Z" fill="#d8d8d8"/></svg>
<svg style="left:344px;top:86px;" width="17" height="11" viewBox="0 0 17 11"><path d="M16 5 L10 0 V3 H6 C2 3 0 6 0 9 C1 7 3 6.5 6 6.5 H10 V10Z" fill="#d6d6d6"/></svg>
<svg style="left:365px;top:89px;" width="10" height="6" viewBox="0 0 10 6"><path d="M0 0 H9 L4.5 4.95Z" fill="#d8d8d8"/></svg>
<svg style="left:380px;top:82px;" width="2" height="18" viewBox="0 0 2 18"><rect x="0" y="0" width="1" height="18" fill="#22262d"/><rect x="1" y="0" width="1" height="18" fill="#59606c"/></svg>
<svg style="left:385px;top:83px;" width="18" height="18" viewBox="0 0 18 18"><g stroke="#d6d6d6" stroke-width="2.3" stroke-linecap="round"><path d="M4.7 2.6 L6.5 9 M8.8 1 V8 M12.8 2.4 L11.5 8 M15.8 5.3 L13.5 10 M2 10.5 L6 13"/></g><path d="M5.5 7.5 L14.5 8.5 L14.3 12 L12.8 15.5 Q10 16.6 7 15.5 L3.5 12.5Z" fill="#d6d6d6"/></svg>
<svg style="left:409px;top:83px;" width="18" height="18" viewBox="0 0 18 18"><path d="M0.5 4.5 H7.5 M4 1 V8 M0.5 10.5 H7.5" stroke="#e4e4e4" stroke-width="1.2"/><circle cx="11" cy="12" r="2.8" fill="none" stroke="#e4e4e4" stroke-width="1.3"/><path d="M13 14 L15.5 16.5" stroke="#d9b07a" stroke-width="1.3"/></svg>
<svg style="left:432px;top:83px;" width="18" height="18" viewBox="0 0 18 18"><path d="M0.5 0.5 H14 V9 M9 13.5 H0.5 V0.5" fill="none" stroke="#e4e4e4" stroke-width="1.2"/><circle cx="11.5" cy="11.5" r="2.8" fill="none" stroke="#e4e4e4" stroke-width="1.3"/><path d="M13 16 H16 V13Z" fill="#f4f4f4"/></svg>
<svg style="left:455px;top:83px;" width="18" height="18" viewBox="0 0 18 18"><path d="M0.5 10 V13.5 H3 M14 9 V3.5 H11" fill="none" stroke="#e4e4e4" stroke-width="1.2"/><path d="M5 13 V5 H12 V9Z" fill="#6a707c"/><path d="M0 3 L4 0 V2 H9 C11 2 12 3.5 12 5 C11 4 10 3.8 9 3.8 H4 V6Z" fill="#5cb6f2"/><circle cx="10.5" cy="12" r="2.8" fill="none" stroke="#e4e4e4" stroke-width="1.3"/><path d="M12.5 14 L15 16.5" stroke="#d9b07a" stroke-width="1.3"/></svg>
<svg style="left:478px;top:82px;" width="2" height="18" viewBox="0 0 2 18"><rect x="0" y="0" width="1" height="18" fill="#22262d"/><rect x="1" y="0" width="1" height="18" fill="#59606c"/></svg>
<svg style="left:486px;top:83px;" width="18" height="18" viewBox="0 0 18 18"><rect x="0" y="0" width="12" height="16" fill="#d6d6d6"/><rect x="1.5" y="1.5" width="9" height="6" fill="#1e2229"/><rect x="2.5" y="2.5" width="7" height="4" fill="#7cc3f5"/><path d="M2 10.5 H10 M2 13.5 H10 M7.5 9 V12 M4.5 12 V15" stroke="#666" stroke-width="1"/></svg>
<svg style="left:507px;top:83px;" width="18" height="18" viewBox="0 0 18 18"><rect x="0" y="0" width="5" height="16" fill="#d6d6d6"/><rect x="6" y="0" width="10" height="16" fill="#d6d6d6"/><path d="M2.5 3 V4 M2.5 6 V7 M2.5 9 V10 M2.5 12 V13" stroke="#555"/><path d="M7.5 2.5 h2.5 v2.5 h-2.5z M11.5 2.5 h2.5 v2.5 h-2.5z M7.5 6.5 h2.5 v2.5 h-2.5z M11.5 6.5 h2.5 v2.5 h-2.5z M8 11 h6 v3 h-6z" fill="none" stroke="#555" stroke-width="1"/></svg>
<svg style="left:532px;top:83px;" width="18" height="18" viewBox="0 0 18 18"><path d="M0 0 H12 V6 L10 8 V16 H0Z" fill="#f2f2f2"/><path d="M10 9 L12 7 V9 L10 11Z" fill="#f2f2f2"/><path d="M2.5 3.5 h2 v2 h-2z M6.5 3.5 h2 v2 h-2z M2.5 7.5 h2 v2 h-2z M6.5 7.5 h2 v2 h-2z M2.5 11.5 h2 v2 h-2z M6.5 11.5 h2 v2 h-2z" fill="#444"/></svg>
<svg style="left:553px;top:83px;" width="18" height="18" viewBox="0 0 18 18"><path d="M0 4 H6 L4.5 0.5 H8.5 C10 0.5 10.5 1 11 2 L15.5 11 C16.5 13 16 16 13 16 H0Z" fill="#d6d6d6"/><path d="M5 0.5 L11 12.5 C11.5 14 13.5 14.5 14 12.5 C14.2 11.5 13 11 12 11.5" fill="none" stroke="#777" stroke-width="0.9"/></svg>
<svg style="left:576px;top:83px;" width="18" height="18" viewBox="0 0 18 18"><rect x="0" y="0" width="8" height="8" fill="#f7d475"/><path d="M5 5 H8 V8Z" fill="#c9a24a"/><rect x="3" y="9" width="4" height="2" fill="#eee"/><rect x="3" y="12" width="2" height="3" fill="#eee"/><rect x="9" y="2" width="2" height="6" fill="#eee"/><rect x="12" y="4" width="2" height="3" fill="#eee"/><rect x="6" y="9" width="11" height="8" fill="#f4f4f4"/><rect x="6" y="9" width="11" height="2" fill="#999"/><path d="M8 13 h1 M11 13 h5 M8 15 h1 M11 15 h5" stroke="#444"/></svg>
<svg style="left:601px;top:83px;" width="18" height="18" viewBox="0 0 18 18"><rect x="0" y="0" width="12" height="16" fill="#d6d6d6"/><rect x="2" y="2" width="8" height="3" fill="#555"/><path d="M2 7 h2v2h-2z M5 7 h2v2h-2z M8 7 h2v2h-2z M2 10 h2v2h-2z M5 10 h2v2h-2z M8 10 h2v2h-2z M2 13 h2v2h-2z M5 13 h2v2h-2z M8 13 h2v2h-2z" fill="#555"/></svg>
<svg style="left:622px;top:82px;" width="2" height="18" viewBox="0 0 2 18"><rect x="0" y="0" width="1" height="18" fill="#22262d"/><rect x="1" y="0" width="1" height="18" fill="#59606c"/></svg>
<svg style="left:628px;top:83px;" width="18" height="18" viewBox="0 0 18 18"><circle cx="8" cy="8" r="8" fill="#d6d6d6"/><text x="8" y="13" font-size="12" font-weight="bold" fill="#555" text-anchor="middle" font-family="Liberation Sans">?</text></svg>
<svg style="left:653px;top:83px;" width="3" height="14" viewBox="0 0 3 14"><rect x="0" y="0" width="1" height="1" fill="#c9c9c9"/><rect x="2" y="0" width="1" height="1" fill="#c9c9c9"/><rect x="0" y="2" width="1" height="1" fill="#c9c9c9"/><rect x="2" y="2" width="1" height="1" fill="#c9c9c9"/><rect x="0" y="4" width="1" height="1" fill="#c9c9c9"/><rect x="2" y="4" width="1" height="1" fill="#c9c9c9"/><rect x="0" y="6" width="1" height="1" fill="#c9c9c9"/><rect x="2" y="6" width="1" height="1" fill="#c9c9c9"/><rect x="0" y="8" width="1" height="1" fill="#c9c9c9"/><rect x="2" y="8" width="1" height="1" fill="#c9c9c9"/><rect x="0" y="10" width="1" height="1" fill="#c9c9c9"/><rect x="2" y="10" width="1" height="1" fill="#c9c9c9"/><rect x="0" y="12" width="1" height="1" fill="#c9c9c9"/><rect x="2" y="12" width="1" height="1" fill="#c9c9c9"/></svg>
<svg style="left:660px;top:83px;" width="18" height="18" viewBox="0 0 18 18"><path d="M0 12 L5 0 H7 L12 12 H10 L8.8 9 H3.2 L2 12Z M3.9 7.3 H8.1 L6 2Z" fill="#d6d6d6"/><path d="M10 16 C9.5 14 11 12.5 12.5 13 L14 14.5 C13 16 11.5 16.5 10 16Z" fill="#d9a060"/><path d="M13 13.5 L17 9.5" stroke="#eee" stroke-width="1.2"/></svg>
<svg style="left:810px;top:83px;" width="18" height="18" viewBox="0 0 18 18"><path d="M0.5 7 V14 M15.5 7 V14" stroke="#e4e4e4"/><path d="M1 10.5 H15" stroke="#e4e4e4"/><path d="M1 10.5 L3.5 9 V12Z M15 10.5 L12.5 9 V12Z" fill="#e4e4e4"/><path d="M6 9 C6 7 8 6 9 7 L10 8 C9 9.5 7.5 9.8 6 9Z" fill="#d9a060"/><path d="M9.5 6.5 L14 2" stroke="#eee" stroke-width="1.2"/></svg>
<svg style="left:953px;top:82px;" width="2" height="18" viewBox="0 0 2 18"><rect x="0" y="0" width="1" height="18" fill="#22262d"/><rect x="1" y="0" width="1" height="18" fill="#59606c"/></svg>
<svg style="left:958px;top:83px;" width="18" height="18" viewBox="0 0 18 18"><path d="M0.5 0.5 H13.5 V12 M9 13.5 H0.5 V0.5 M0.5 4 H13.5 M0.5 7.5 H10 M0.5 10.5 H8 M4.5 4 V13.5 M9 4 V10" fill="none" stroke="#e4e4e4" stroke-width="1"/><rect x="0" y="0" width="14" height="3" fill="#e4e4e4"/><path d="M10 16 C9.5 14 11 12.5 12.5 13 L14 14.5 C13 16 11.5 16.5 10 16Z" fill="#d9a060"/><path d="M13 13.5 L17 9.5" stroke="#eee" stroke-width="1.2"/></svg>
<svg style="left:1102px;top:82px;" width="2" height="18" viewBox="0 0 2 18"><rect x="0" y="0" width="1" height="18" fill="#22262d"/><rect x="1" y="0" width="1" height="18" fill="#59606c"/></svg>
<svg style="left:1107px;top:83px;" width="18" height="18" viewBox="0 0 18 18"><circle cx="12.5" cy="3.5" r="3" fill="none" stroke="#e4e4e4" stroke-width="1.1"/><path d="M10 5.5 L5 9 L2 14" fill="none" stroke="#e4e4e4" stroke-width="1.1"/><path d="M0.5 16 L1.5 11.5 L4.5 13.5Z" fill="#e4e4e4"/><path d="M7 16 C6.5 14 8 12.5 9.5 13 L11 14.5 C10 16 8.5 16.5 7 16Z" fill="#d9a060"/><path d="M10 13.5 L14 9.5" stroke="#eee" stroke-width="1.2"/></svg>
<svg style="left:5px;top:110px;" width="3" height="14" viewBox="0 0 3 14"><rect x="0" y="0" width="1" height="1" fill="#c9c9c9"/><rect x="2" y="0" width="1" height="1" fill="#c9c9c9"/><rect x="0" y="2" width="1" height="1" fill="#c9c9c9"/><rect x="2" y="2" width="1" height="1" fill="#c9c9c9"/><rect x="0" y="4" width="1" height="1" fill="#c9c9c9"/><rect x="2" y="4" width="1" height="1" fill="#c9c9c9"/><rect x="0" y="6" width="1" height="1" fill="#c9c9c9"/><rect x="2" y="6" width="1" height="1" fill="#c9c9c9"/><rect x="0" y="8" width="1" height="1" fill="#c9c9c9"/><rect x="2" y="8" width="1" height="1" fill="#c9c9c9"/><rect x="0" y="10" width="1" height="1" fill="#c9c9c9"/><rect x="2" y="10" width="1" height="1" fill="#c9c9c9"/><rect x="0" y="12" width="1" height="1" fill="#c9c9c9"/><rect x="2" y="12" width="1" height="1" fill="#c9c9c9"/></svg>
<svg style="left:14px;top:110px;" width="18" height="18" viewBox="0 0 18 18"><path d="M3 4 L7 0 H17 L13 4Z" fill="#d6d6d6"/><path d="M0 7 H9 M0 10 H9 M0 13 H9" stroke="#d6d6d6" stroke-width="1.6"/><rect x="8" y="6" width="9" height="11" fill="#f4f4f4"/><rect x="10" y="7.5" width="5" height="3" fill="#6cb8ef"/><path d="M10 13.5 H15 M12.5 12 V15" stroke="#444" stroke-width="1"/></svg>
<svg style="left:40px;top:110px;" width="12" height="15" viewBox="0 0 12 15"><circle cx="5.5" cy="5.5" r="5" fill="#f5a300"/><rect x="3.5" y="10" width="4" height="4" rx="1" fill="#666"/></svg>
<svg style="left:55px;top:109px;" width="16" height="16" viewBox="0 0 16 16"><circle cx="7.5" cy="7.5" r="4.4" fill="#f5a300"/><path d="M7.5 0 V2 M7.5 13 V15 M0 7.5 H2 M13 7.5 H15 M2.2 2.2 L3.6 3.6 M11.4 11.4 L12.8 12.8 M2.2 12.8 L3.6 11.4 M11.4 3.6 L12.8 2.2" stroke="#f5a300" stroke-width="1.1"/></svg>
<svg style="left:76px;top:110px;" width="15" height="15" viewBox="0 0 15 15"><path d="M3 0.5 H0.5 V3 M10 0.5 H12.5 V3 M0.5 10 V12.5 H3" fill="none" stroke="#555" stroke-width="1"/><rect x="2.5" y="2.5" width="7" height="7" fill="#f4f4f4" stroke="#bbb" stroke-width="0.6"/><circle cx="10.5" cy="10.5" r="2.5" fill="#f5a300"/><path d="M10 6.5 V7 M10 13 V13.5 M6.5 10 H7 M13 10 H13.5 M7.8 7.8 L8 8 M12 12 L12.2 12.2 M7.8 12.2 L8 12 M12 8 L12.2 7.8" stroke="#f5a300" stroke-width="1"/></svg>
<svg style="left:96px;top:110px;" width="14" height="15" viewBox="0 0 14 15"><path d="M7 6 V3 C7 0.5 12 0.5 12 3 V4" fill="none" stroke="#f5a300" stroke-width="1.8"/><rect x="0" y="6" width="9.5" height="8" fill="#f5a300"/><rect x="4.3" y="8.5" width="1" height="2.5" fill="#fff"/></svg>
<svg style="left:337px;top:110px;" width="18" height="18" viewBox="0 0 18 18"><circle cx="8" cy="3.5" r="3.2" fill="#d6d6d6"/><path d="M0 9.5 L3 6.5 H16 L12 9.5Z" fill="#5cb6f2"/><path d="M0 12 L3 9 M0 12 H12 L16 9 M0 15 H12 L16 12" fill="none" stroke="#e4e4e4" stroke-width="1.2"/></svg>
<svg style="left:360px;top:110px;" width="18" height="18" viewBox="0 0 18 18"><path d="M0 3 L4 0 V2 H7 C9 2 10 3 10 4.5 C9 3.8 8 3.6 7 3.6 H4 V6Z" fill="#5cb6f2"/><path d="M1 9.5 L4 6.5 H13 L10 9.5Z" fill="#d6d6d6"/><path d="M1 12 L4 9 M1 12 H10 L13 9 M1 15 H10 L13 12" fill="none" stroke="#e4e4e4" stroke-width="1.2"/></svg>
<svg style="left:383px;top:110px;" width="18" height="18" viewBox="0 0 18 18"><path d="M0 5 L4 1 H13 L9 5Z" fill="#d6d6d6"/><path d="M0 8 H6 M0 11 H6" stroke="#d6d6d6" stroke-width="1.5"/><path d="M10 5 L13 2 M11 7 L13 5" stroke="#e4e4e4"/><rect x="7" y="8" width="10" height="9" fill="#f4f4f4"/><rect x="7" y="8" width="10" height="1.5" fill="#999"/><path d="M9 12 h1 M11 12 h5 M9 14.5 h1 M11 14.5 h5" stroke="#444"/></svg>
<svg style="left:407px;top:110px;" width="3" height="14" viewBox="0 0 3 14"><rect x="0" y="0" width="1" height="1" fill="#c9c9c9"/><rect x="2" y="0" width="1" height="1" fill="#c9c9c9"/><rect x="0" y="2" width="1" height="1" fill="#c9c9c9"/><rect x="2" y="2" width="1" height="1" fill="#c9c9c9"/><rect x="0" y="4" width="1" height="1" fill="#c9c9c9"/><rect x="2" y="4" width="1" height="1" fill="#c9c9c9"/><rect x="0" y="6" width="1" height="1" fill="#c9c9c9"/><rect x="2" y="6" width="1" height="1" fill="#c9c9c9"/><rect x="0" y="8" width="1" height="1" fill="#c9c9c9"/><rect x="2" y="8" width="1" height="1" fill="#c9c9c9"/><rect x="0" y="10" width="1" height="1" fill="#c9c9c9"/><rect x="2" y="10" width="1" height="1" fill="#c9c9c9"/><rect x="0" y="12" width="1" height="1" fill="#c9c9c9"/><rect x="2" y="12" width="1" height="1" fill="#c9c9c9"/></svg>
<svg style="left:566px;top:108px;" width="2" height="20" viewBox="0 0 2 20"><rect x="0" y="0" width="1" height="20" fill="#22262d"/><rect x="1" y="0" width="1" height="20" fill="#59606c"/></svg>
<svg style="left:731px;top:108px;" width="2" height="20" viewBox="0 0 2 20"><rect x="0" y="0" width="1" height="20" fill="#22262d"/><rect x="1" y="0" width="1" height="20" fill="#59606c"/></svg>
<svg style="left:862px;top:108px;" width="2" height="20" viewBox="0 0 2 20"><rect x="0" y="0" width="1" height="20" fill="#22262d"/><rect x="1" y="0" width="1" height="20" fill="#59606c"/></svg>
<svg style="left:991px;top:110px;" width="3" height="14" viewBox="0 0 3 14"><rect x="0" y="0" width="1" height="1" fill="#c9c9c9"/><rect x="2" y="0" width="1" height="1" fill="#c9c9c9"/><rect x="0" y="2" width="1" height="1" fill="#c9c9c9"/><rect x="2" y="2" width="1" height="1" fill="#c9c9c9"/><rect x="0" y="4" width="1" height="1" fill="#c9c9c9"/><rect x="2" y="4" width="1" height="1" fill="#c9c9c9"/><rect x="0" y="6" width="1" height="1" fill="#c9c9c9"/><rect x="2" y="6" width="1" height="1" fill="#c9c9c9"/><rect x="0" y="8" width="1" height="1" fill="#c9c9c9"/><rect x="2" y="8" width="1" height="1" fill="#c9c9c9"/><rect x="0" y="10" width="1" height="1" fill="#c9c9c9"/><rect x="2" y="10" width="1" height="1" fill="#c9c9c9"/><rect x="0" y="12" width="1" height="1" fill="#c9c9c9"/><rect x="2" y="12" width="1" height="1" fill="#c9c9c9"/></svg>
<svg style="left:998px;top:110px;" width="18" height="18" viewBox="0 0 18 18"><path d="M1.5 1 V15 M16.5 1 V15" stroke="#e4e4e4" stroke-width="1"/><path d="M2 5.5 H16" stroke="#5cb6f2" stroke-width="1"/><path d="M2 5.5 L4.5 3.5 V7.5Z M16 5.5 L13.5 3.5 V7.5Z" fill="#5cb6f2"/></svg>
<svg style="left:1022px;top:110px;" width="18" height="18" viewBox="0 0 18 18"><path d="M0 5.5 L5.5 0 M10 16.5 L16 10.5" stroke="#e4e4e4" stroke-width="1"/><path d="M3.5 3.5 L12.5 12.5" stroke="#5cb6f2" stroke-width="1"/><circle cx="3.8" cy="3.8" r="1.4" fill="#5cb6f2"/><circle cx="12.2" cy="12.2" r="1.4" fill="#5cb6f2"/></svg>
<svg style="left:1045px;top:110px;" width="18" height="18" viewBox="0 0 18 18"><path d="M2.5 15.5 C2.5 8 7 2.5 14 1.5" fill="none" stroke="#5cb6f2" stroke-width="1.1"/><path d="M6.5 15.5 C6.5 10.5 9.5 6.5 14 5.5" fill="none" stroke="#e4e4e4" stroke-width="1.1"/><path d="M14.5 0 V6.5 M0 15.5 H7" stroke="#e4e4e4" stroke-width="1"/><path d="M14 1.5 L11.5 0 V3.5Z M2.5 15.5 L1 13 H4Z" fill="#5cb6f2"/></svg>
<svg style="left:1068px;top:110px;" width="18" height="18" viewBox="0 0 18 18"><path d="M0.5 0 V15.5 H16" fill="none" stroke="#e4e4e4" stroke-width="1"/><path d="M0.5 8.5 H12 M7.5 4.5 V16" stroke="#5cb6f2" stroke-width="1"/><text x="7.5" y="4.5" font-size="5.5" fill="#5cb6f2" text-anchor="middle" font-family="Liberation Sans">X</text><text x="14" y="10" font-size="5.5" fill="#5cb6f2" text-anchor="middle" font-family="Liberation Sans">Y</text></svg>
<svg style="left:1091px;top:108px;" width="2" height="20" viewBox="0 0 2 20"><rect x="0" y="0" width="1" height="20" fill="#22262d"/><rect x="1" y="0" width="1" height="20" fill="#59606c"/></svg>
<svg style="left:1097px;top:110px;" width="18" height="18" viewBox="0 0 18 18"><path d="M0.5 16 C0.5 8 6 1.5 15 0.5" fill="none" stroke="#e4e4e4" stroke-width="1.1"/><path d="M6 6 L15 15.5" stroke="#5cb6f2" stroke-width="1.1"/><path d="M5.5 5.5 L8.5 6.5 L6.5 8.5Z" fill="#5cb6f2"/></svg>
<svg style="left:1120px;top:110px;" width="18" height="18" viewBox="0 0 18 18"><path d="M0.5 16 C0.5 8 6 1.5 15 0.5" fill="none" stroke="#e4e4e4" stroke-width="1.1"/><path d="M5.5 6 L9 9 L8 10.5 L14.5 15" fill="none" stroke="#5cb6f2" stroke-width="1.1"/><path d="M5 5.5 L8 6.5 L6 8.5Z" fill="#5cb6f2"/></svg>
<svg style="left:1143px;top:110px;" width="18" height="18" viewBox="0 0 18 18"><circle cx="8" cy="8" r="7.5" fill="none" stroke="#e4e4e4" stroke-width="1.1"/><path d="M3.5 3.5 L12.5 12.5" stroke="#5cb6f2" stroke-width="1.1"/><path d="M3 3 L6 4 L4 6Z M13 13 L10 12 L12 10Z" fill="#5cb6f2"/></svg>
<svg style="left:1166px;top:110px;" width="18" height="18" viewBox="0 0 18 18"><path d="M0 10 L10 0 M0 15.5 H16" stroke="#e4e4e4" stroke-width="1"/><path d="M8.5 3.5 C10.5 6.5 11.5 10 11.5 15" fill="none" stroke="#5cb6f2" stroke-width="1.1"/><path d="M8 2.5 L10.5 4.5 L8 5.5Z M11.5 15.5 L10 13 H13Z" fill="#5cb6f2"/></svg>
<svg style="left:1189px;top:108px;" width="2" height="20" viewBox="0 0 2 20"><rect x="0" y="0" width="1" height="20" fill="#22262d"/><rect x="1" y="0" width="1" height="20" fill="#59606c"/></svg>
<svg style="left:1195px;top:110px;" width="18" height="18" viewBox="0 0 18 18"><path d="M1.5 0 V16 M16.5 0 V16" stroke="#e4e4e4" stroke-width="1"/><path d="M2 2.5 H16" stroke="#e4e4e4" stroke-width="1"/><path d="M2 2.5 L4 1 V4Z M16 2.5 L14 1 V4Z" fill="#e4e4e4"/><path d="M10 7 L5.5 11.5 H8.5 L6.5 15.5 L12 10.5 H9Z" fill="#f3c766"/></svg>
<svg style="left:1218px;top:110px;" width="18" height="18" viewBox="0 0 18 18"><path d="M1.5 1 V16 M12.5 9 V16" stroke="#e4e4e4" stroke-width="1"/><path d="M2 5.5 H15 M2 12.5 H12" stroke="#5cb6f2" stroke-width="1"/><path d="M15.5 5.5 L13 3.5 V7.5Z M2 5.5 L4.5 3.5 V7.5Z M2 12.5 L4.5 10.5 V14.5Z M12 12.5 L9.5 10.5 V14.5Z" fill="#5cb6f2"/></svg>
<svg style="left:1240px;top:110px;" width="18" height="18" viewBox="0 0 18 18"><path d="M0.5 1 V16 M7.5 1 V16 M14.5 1 V16" stroke="#e4e4e4" stroke-width="1"/><path d="M1 5.5 H14" stroke="#5cb6f2" stroke-width="1"/><path d="M1 5.5 L3.5 3.5 V7.5Z M7.5 5.5 L5 3.5 V7.5Z M7.5 5.5 L10 3.5 V7.5Z M14 5.5 L11.5 3.5 V7.5Z" fill="#5cb6f2"/></svg>
<svg style="left:1263px;top:110px;" width="18" height="18" viewBox="0 0 18 18"><path d="M1 1.5 H16 M1 14.5 H16" stroke="#e4e4e4" stroke-width="1"/><path d="M0.5 1.5 L3 0 V3Z M16.5 1.5 L14 0 V3Z M0.5 14.5 L3 13 V16Z M16.5 14.5 L14 13 V16Z" fill="#e4e4e4"/><rect x="6" y="4" width="5" height="8" fill="#f3c766"/><path d="M6 6.5 H8 M6 8.5 H7.5 M6 10.5 H8" stroke="#8a6a30" stroke-width="0.8"/></svg>
<svg style="left:1285px;top:110px;" width="18" height="18" viewBox="0 0 18 18"><path d="M8.5 0 V11 M3 15.5 H14" stroke="#e4e4e4" stroke-width="1"/><path d="M5 10 H12 L8.5 14Z" fill="#e4e4e4"/><path d="M0 5.5 H5 M12 5.5 H17" stroke="#5cb6f2" stroke-width="1"/></svg>
<svg style="left:6px;top:137px;" width="14" height="3" viewBox="0 0 14 3"><rect x="0" y="0" width="1" height="1" fill="#c9c9c9"/><rect x="0" y="2" width="1" height="1" fill="#c9c9c9"/><rect x="2" y="0" width="1" height="1" fill="#c9c9c9"/><rect x="2" y="2" width="1" height="1" fill="#c9c9c9"/><rect x="4" y="0" width="1" height="1" fill="#c9c9c9"/><rect x="4" y="2" width="1" height="1" fill="#c9c9c9"/><rect x="6" y="0" width="1" height="1" fill="#c9c9c9"/><rect x="6" y="2" width="1" height="1" fill="#c9c9c9"/><rect x="8" y="0" width="1" height="1" fill="#c9c9c9"/><rect x="8" y="2" width="1" height="1" fill="#c9c9c9"/><rect x="10" y="0" width="1" height="1" fill="#c9c9c9"/><rect x="10" y="2" width="1" height="1" fill="#c9c9c9"/><rect x="12" y="0" width="1" height="1" fill="#c9c9c9"/><rect x="12" y="2" width="1" height="1" fill="#c9c9c9"/></svg>
<svg style="left:6px;top:146px;" width="18" height="18" viewBox="0 0 18 18"><path d="M1 15 L15 1" stroke="#e4e4e4" stroke-width="1.1"/><rect x="0.25" y="13.25" width="2.5" height="2.5" fill="#5cb6f2"/><rect x="13.25" y="0.25" width="2.5" height="2.5" fill="#5cb6f2"/></svg>
<svg style="left:6px;top:168px;" width="18" height="18" viewBox="0 0 18 18"><path d="M2 14 L14 2" stroke="#e4e4e4" stroke-width="1.1" stroke-dasharray="2 1.5"/><path d="M0 16 L1.5 10 L6 14.5Z M16 0 L14.5 6 L10 1.5Z" fill="#e4e4e4"/><rect x="6.75" y="6.75" width="2.5" height="2.5" fill="#5cb6f2"/></svg>
<svg style="left:6px;top:192px;" width="18" height="18" viewBox="0 0 18 18"><path d="M1 10 H9 M9 1.5 C13 1.5 13 10 9 10" fill="none" stroke="#e4e4e4" stroke-width="1.1"/><rect x="0.25" y="8.75" width="2.5" height="2.5" fill="#5cb6f2"/><rect x="8.25" y="8.75" width="2.5" height="2.5" fill="#5cb6f2"/><rect x="8.25" y="0.25" width="2.5" height="2.5" fill="#5cb6f2"/></svg>
<svg style="left:6px;top:213px;" width="18" height="18" viewBox="0 0 18 18"><path d="M8 1 L15 6.5 L12.5 14.5 H3.5 L1 6.5Z" fill="none" stroke="#e4e4e4" stroke-width="1.1"/><rect x="6.75" y="6.25" width="2.5" height="2.5" fill="#5cb6f2"/><rect x="11.25" y="12.75" width="2.5" height="2.5" fill="#5cb6f2"/></svg>
<svg style="left:6px;top:236px;" width="18" height="18" viewBox="0 0 18 18"><rect x="1.5" y="1.5" width="13" height="10" fill="none" stroke="#e4e4e4" stroke-width="1"/><rect x="0.25" y="0.25" width="2.5" height="2.5" fill="#5cb6f2"/><rect x="13.25" y="10.25" width="2.5" height="2.5" fill="#5cb6f2"/></svg>
<svg style="left:6px;top:257px;" width="18" height="18" viewBox="0 0 18 18"><path d="M1.5 14 C2 7 7 2 14 1.5" fill="none" stroke="#e4e4e4" stroke-width="1.1" stroke-dasharray="2.5 1.5"/><rect x="0.25" y="11.75" width="2.5" height="2.5" fill="#5cb6f2"/><rect x="3.75" y="3.75" width="2.5" height="2.5" fill="#5cb6f2"/><rect x="12.75" y="0.25" width="2.5" height="2.5" fill="#5cb6f2"/></svg>
<svg style="left:6px;top:278px;" width="18" height="18" viewBox="0 0 18 18"><circle cx="8" cy="8" r="7.5" fill="none" stroke="#e4e4e4" stroke-width="1.1"/><rect x="6.75" y="7.25" width="2.5" height="2.5" fill="#5cb6f2"/><path d="M9 7 L12 4" stroke="#5cb6f2" stroke-width="1.1"/><path d="M13 3 L10 3.5 L12.5 6Z" fill="#5cb6f2"/></svg>
<svg style="left:6px;top:302px;" width="18" height="18" viewBox="0 0 18 18"><path d="M3 3 C4 0.5 7 1 8 2.5 C10 1 13 2 13.5 4.5 C16 5 16 9 14 10 C14 12.5 10.5 13 9.5 12 C8 14 4 13.5 4 11.5 C1 11.5 0.5 8 2 7 C0.5 5 1.5 3 3 3Z" fill="none" stroke="#e4e4e4" stroke-width="1.1"/></svg>
<svg style="left:6px;top:322px;" width="18" height="18" viewBox="0 0 18 18"><path d="M1.5 15 C3 7 5 1 8 5 C10 10 13 9 14.5 1" fill="none" stroke="#e4e4e4" stroke-width="1.1" stroke-dasharray="3 1.5"/><rect x="0.25" y="13.25" width="2.5" height="2.5" fill="#5cb6f2"/><rect x="2.25" y="1.25" width="2.5" height="2.5" fill="#5cb6f2"/><rect x="9.75" y="6.25" width="2.5" height="2.5" fill="#5cb6f2"/><rect x="13.25" y="0.25" width="2.5" height="2.5" fill="#5cb6f2"/></svg>
<svg style="left:6px;top:346px;" width="18" height="18" viewBox="0 0 18 18"><ellipse cx="8" cy="5.5" rx="7" ry="4.5" fill="none" stroke="#e4e4e4" stroke-width="1.1" stroke-dasharray="4 1.5"/><rect x="0.25" y="4.25" width="2.5" height="2.5" fill="#5cb6f2"/><rect x="6.75" y="-0.44999999999999996" width="2.5" height="2.5" fill="#5cb6f2"/><rect x="13.25" y="4.25" width="2.5" height="2.5" fill="#5cb6f2"/></svg>
<svg style="left:6px;top:368px;" width="18" height="18" viewBox="0 0 18 18"><path d="M12 2 C9 -0.5 1 0 1 5 C1 9 5 10 8 9.5" fill="none" stroke="#e4e4e4" stroke-width="1.1"/><rect x="6.25" y="3.25" width="2.5" height="2.5" fill="#5cb6f2"/><rect x="11.75" y="3.25" width="2.5" height="2.5" fill="#5cb6f2"/><rect x="5.75" y="8.25" width="2.5" height="2.5" fill="#5cb6f2"/></svg>
<svg style="left:6px;top:388px;" width="18" height="18" viewBox="0 0 18 18"><path d="M8 0 H13 L16 3 V16 H8Z" fill="#5cb6f2"/><path d="M13 0 L16 3 H13Z" fill="#dff"/><path d="M12 16 L16 12 V16Z" fill="#f4f4f4"/><rect x="1.5" y="6.5" width="8" height="6.5" fill="#6a707c" stroke="#e4e4e4" stroke-width="1"/><circle cx="10" cy="12.5" r="3.5" fill="#6a707c" stroke="#e4e4e4" stroke-width="1"/><rect x="0" y="12" width="2" height="2" fill="#f4f4f4"/></svg>
<svg style="left:6px;top:411px;" width="18" height="18" viewBox="0 0 18 18"><path d="M12 0 L13 3 L16 3 L13.5 5 L15 8 L12 6.5 L9 8 L10.5 5 L8 3 L11 3Z" fill="#f7c56a"/><rect x="1.5" y="6.5" width="8" height="6.5" fill="#6a707c" stroke="#e4e4e4" stroke-width="1"/><circle cx="10" cy="12.5" r="3.5" fill="#6a707c" stroke="#e4e4e4" stroke-width="1"/><rect x="0" y="12" width="2" height="2" fill="#f4f4f4"/></svg>
<svg style="left:6px;top:434px;" width="18" height="18" viewBox="0 0 18 18"><rect x="7" y="0" width="2" height="2" fill="#e4e4e4"/><rect x="2" y="5" width="2" height="2" fill="#e4e4e4"/><rect x="12" y="5" width="2" height="2" fill="#e4e4e4"/><rect x="7" y="10" width="2" height="2" fill="#e4e4e4"/></svg>
<svg style="left:6px;top:454px;" width="18" height="18" viewBox="0 0 18 18"><path d="M0 3 H16 M0 13.5 H16 M3 0 V16 M13 0 V16" stroke="#e4e4e4" stroke-width="1.1"/><rect x="4" y="4" width="8" height="9" fill="#3d4f66"/><path d="M4 8 L8 4 M4 12 L12 4 M7 13 L12 8" stroke="#5cb6f2" stroke-width="1"/></svg>
<svg style="left:6px;top:476px;" width="18" height="18" viewBox="0 0 18 18"><defs><linearGradient id="gg" x1="0" y1="0" x2="0" y2="1"><stop offset="0" stop-color="#6ec0ff"/><stop offset="1" stop-color="#3a4150"/></linearGradient></defs><path d="M0 3 H16 M0 13.5 H16 M3 0 V16 M13 0 V16" stroke="#e4e4e4" stroke-width="1.1"/><rect x="4" y="4" width="8" height="9" fill="url(#gg)"/></svg>
<svg style="left:6px;top:499px;" width="18" height="18" viewBox="0 0 18 18"><path d="M0 0 H10 L16 6 V13 H0Z" fill="#d6d6d6"/><circle cx="7.5" cy="6.5" r="2.3" fill="#333"/></svg>
<svg style="left:6px;top:521px;" width="18" height="18" viewBox="0 0 18 18"><path d="M0.5 0.5 H15.5 V13.5 H0.5Z M0.5 4 H15.5 M0.5 7 H15.5 M0.5 10.3 H15.5 M5.5 4 V13.5 M10.5 4 V13.5" fill="none" stroke="#e4e4e4" stroke-width="1"/></svg>
<svg style="left:6px;top:543px;" width="18" height="18" viewBox="0 0 18 18"><path d="M0 14.5 L6.2 0 H8.8 L15 14.5 H13 L11.5 10.5 H3.5 L2 14.5Z M4.2 8.7 H10.8 L7.5 1.8Z" fill="#e4e4e4"/></svg>
<svg style="left:6px;top:564px;" width="18" height="18" viewBox="0 0 18 18"><circle cx="3.5" cy="3.5" r="3.3" fill="#5fcc7a"/><path d="M8 2.5 H11 V6" fill="none" stroke="#f4f4f4" stroke-width="1.1"/><path d="M9.3 5.5 H12.7 L11 7.5Z" fill="#f4f4f4"/><circle cx="12.5" cy="12" r="3.3" fill="#5cb6f2"/></svg>
<svg style="left:1277px;top:137px;" width="14" height="3" viewBox="0 0 14 3"><rect x="0" y="0" width="1" height="1" fill="#c9c9c9"/><rect x="0" y="2" width="1" height="1" fill="#c9c9c9"/><rect x="2" y="0" width="1" height="1" fill="#c9c9c9"/><rect x="2" y="2" width="1" height="1" fill="#c9c9c9"/><rect x="4" y="0" width="1" height="1" fill="#c9c9c9"/><rect x="4" y="2" width="1" height="1" fill="#c9c9c9"/><rect x="6" y="0" width="1" height="1" fill="#c9c9c9"/><rect x="6" y="2" width="1" height="1" fill="#c9c9c9"/><rect x="8" y="0" width="1" height="1" fill="#c9c9c9"/><rect x="8" y="2" width="1" height="1" fill="#c9c9c9"/><rect x="10" y="0" width="1" height="1" fill="#c9c9c9"/><rect x="10" y="2" width="1" height="1" fill="#c9c9c9"/><rect x="12" y="0" width="1" height="1" fill="#c9c9c9"/><rect x="12" y="2" width="1" height="1" fill="#c9c9c9"/></svg>
<svg style="left:1277px;top:146px;" width="18" height="18" viewBox="0 0 18 18"><path d="M8.5 11.5 L5 8.5 L14 -0.5 H16.5 V3.5Z" fill="#f3c766"/><path d="M5 8.5 L8.5 11.5 L7 13 L3.5 10Z" fill="#f4f4f4"/><circle cx="5.2" cy="12.5" r="2.5" fill="#ee5050"/><path d="M0 15.5 H3 M8 15.5 H16" stroke="#5cb6f2" stroke-width="1"/><path d="M0 15.5 H3" stroke="#ddd" stroke-width="1"/></svg>
<svg style="left:1277px;top:167px;" width="18" height="18" viewBox="0 0 18 18"><circle cx="3.4" cy="4.6" r="3" fill="none" stroke="#e4e4e4" stroke-width="1"/><path d="M8.5 2.3 H12.5 V6.5" fill="none" stroke="#e4e4e4" stroke-width="1.1"/><path d="M10.5 6 H14.5 L12.5 8.5Z" fill="#e4e4e4"/><circle cx="7.4" cy="13.2" r="3" fill="none" stroke="#5cb6f2" stroke-width="1"/><circle cx="13.3" cy="13.2" r="3" fill="none" stroke="#5cb6f2" stroke-width="1"/></svg>
<svg style="left:1277px;top:191px;" width="18" height="18" viewBox="0 0 18 18"><path d="M7 0.5 L1 14 H7Z" fill="none" stroke="#e4e4e4" stroke-width="1.1"/><path d="M9 0.5 L15 14 H9Z" fill="none" stroke="#5cb6f2" stroke-width="1.1"/></svg>
<svg style="left:1277px;top:212px;" width="18" height="18" viewBox="0 0 18 18"><path d="M15 1 H6 C0 1 0 14 6 14 H15" fill="none" stroke="#5cb6f2" stroke-width="1.1"/><path d="M15 4.5 H6.5 C3 4.5 3 10.5 6.5 10.5 H15" fill="none" stroke="#e4e4e4" stroke-width="1.1"/></svg>
<svg style="left:1277px;top:234px;" width="18" height="18" viewBox="0 0 18 18"><path d="M1.5 1.5 h5 v5 h-5z" fill="none" stroke="#e4e4e4" stroke-width="1.1"/><path d="M9.5 1.5 h5 v5 h-5z M1.5 9.5 h5 v5 h-5z M9.5 9.5 h5 v5 h-5z" fill="none" stroke="#5cb6f2" stroke-width="1.1"/><path d="M16 12 V16 H12Z" fill="#f4f4f4"/></svg>
<svg style="left:1277px;top:256px;" width="18" height="18" viewBox="0 0 18 18"><path d="M8 0 L11 3.5 H9 V7 H12.5 V5 L16 8 L12.5 11 V9 H9 V12.5 H11 L8 16 L5 12.5 H7 V9 H3.5 V11 L0 8 L3.5 5 V7 H7 V3.5 H5Z" fill="#e4e4e4"/></svg>
<svg style="left:1277px;top:278px;" width="18" height="18" viewBox="0 0 18 18"><path d="M12 3 C7 0 1 3 1 9 C1 14 5 16 8 16 C12 16 15 13 15 9" fill="none" stroke="#e4e4e4" stroke-width="1.1"/><path d="M9 0 L14 3 L9 6Z" fill="#e4e4e4"/></svg>
<svg style="left:1277px;top:300px;" width="18" height="18" viewBox="0 0 18 18"><path d="M0.5 5 V0.5 H15.5 V15.5 H11" fill="none" stroke="#5cb6f2" stroke-width="1.1"/><rect x="0.5" y="7.5" width="8" height="8" fill="none" stroke="#e4e4e4" stroke-width="1.1"/></svg>
<svg style="left:1277px;top:323px;" width="18" height="18" viewBox="0 0 18 18"><path d="M7 0.5 H0.5 V15.5 H7 M11 0.5 L15.5 15.5 H11" fill="none" stroke="#e4e4e4" stroke-width="1.1"/><path d="M11 0.5 L15.5 15.5 H9.5" fill="none" stroke="#5cb6f2" stroke-width="1.1"/><path d="M0.5 0.5 H7 V15.5" fill="none" stroke="#e4e4e4" stroke-width="1.1"/><path d="M4 11 H10" stroke="#e4e4e4" stroke-width="1.1"/><path d="M12 11 L9 9 V13Z" fill="#e4e4e4"/></svg>
<svg style="left:1277px;top:346px;" width="18" height="18" viewBox="0 0 18 18"><path d="M0 1 H5 M11 1 H16" stroke="#5cb6f2" stroke-width="1" stroke-dasharray="1.5 1"/><path d="M4 1.5 L12 12 M9 1 L6 12" stroke="#e4e4e4" stroke-width="1.4"/><circle cx="6.5" cy="13.5" r="2.3" fill="#3a4150" stroke="#e4e4e4" stroke-width="1.2"/><circle cx="12.5" cy="12.5" r="2.3" fill="#3a4150" stroke="#e4e4e4" stroke-width="1.2"/></svg>
<svg style="left:1277px;top:368px;" width="18" height="18" viewBox="0 0 18 18"><path d="M14.5 0 V12" stroke="#e4e4e4" stroke-width="1"/><path d="M4 8.5 H13" stroke="#5cb6f2" stroke-width="1" stroke-dasharray="2 1.2"/><path d="M4 4.5 H10" stroke="#e4e4e4" stroke-width="1"/><path d="M13 4.5 L9.5 2.5 V6.5Z" fill="#e4e4e4"/><path d="M0 8.5 H4" stroke="#e4e4e4" stroke-width="1"/></svg>
<svg style="left:1277px;top:389px;" width="18" height="18" viewBox="0 0 18 18"><path d="M8 2.5 H15.5 V12.5 H0.5 V2.5 H4" fill="none" stroke="#e4e4e4" stroke-width="1"/><path d="M10.5 0 V6" stroke="#5cb6f2" stroke-width="1"/></svg>
<svg style="left:1277px;top:411px;" width="18" height="18" viewBox="0 0 18 18"><path d="M3 2.5 H0.5 V13.5 H15.5 V2.5 H13" fill="none" stroke="#e4e4e4" stroke-width="1"/><path d="M5.5 0 V5.5 M10.5 0 V5.5" stroke="#5cb6f2" stroke-width="1"/></svg>
<svg style="left:1277px;top:438px;" width="18" height="18" viewBox="0 0 18 18"><path d="M0 3.5 H16" stroke="#e4e4e4" stroke-width="1"/><path d="M0.5 1 L7.5 3.5 L0.5 6Z M15.5 1 L8.5 3.5 L15.5 6Z" fill="#5cb6f2"/></svg>
<svg style="left:1277px;top:456px;" width="18" height="18" viewBox="0 0 18 18"><path d="M1 15.5 V11 M1 9 L9 1.5 H15" fill="none" stroke="#e4e4e4" stroke-width="1.1"/><path d="M2 9.5 L9 2.5" stroke="#5cb6f2" stroke-width="1.1"/><path d="M10 1 H16" stroke="#e4e4e4" stroke-width="1.1"/></svg>
<svg style="left:1277px;top:478px;" width="18" height="18" viewBox="0 0 18 18"><path d="M1 15.5 V11" stroke="#e4e4e4" stroke-width="1.1"/><path d="M1 10 C1 5 4 1.5 9 1.5" fill="none" stroke="#5cb6f2" stroke-width="1.2"/><path d="M10 1.5 H16" stroke="#e4e4e4" stroke-width="1.1"/><path d="M1 12 V16" stroke="#e4e4e4" stroke-width="1.1"/></svg>
<svg style="left:1277px;top:500px;" width="18" height="18" viewBox="0 0 18 18"><path d="M1 13.5 C2 9 4 6 8 9 C11 12 14 10 15 4" fill="none" stroke="#5cb6f2" stroke-width="1.2"/><path d="M1 17 L2 13 M14 5 L15 1" stroke="#e4e4e4" stroke-width="1.4"/></svg>
<svg style="left:1277px;top:521px;" width="18" height="18" viewBox="0 0 18 18"><path d="M4.5 1 H15 V11.5 L11.5 15 H1 V4.5Z M1 4.5 H11.5 V15 M11.5 4.5 L15 1" fill="none" stroke="#5cb6f2" stroke-width="1.1"/><rect x="3.5" y="6.5" width="7" height="7" fill="none" stroke="#e4e4e4" stroke-width="1.1"/></svg>
<svg style="left:1277px;top:543px;" width="14" height="3" viewBox="0 0 14 3"><rect x="0" y="0" width="1" height="1" fill="#c9c9c9"/><rect x="0" y="2" width="1" height="1" fill="#c9c9c9"/><rect x="2" y="0" width="1" height="1" fill="#c9c9c9"/><rect x="2" y="2" width="1" height="1" fill="#c9c9c9"/><rect x="4" y="0" width="1" height="1" fill="#c9c9c9"/><rect x="4" y="2" width="1" height="1" fill="#c9c9c9"/><rect x="6" y="0" width="1" height="1" fill="#c9c9c9"/><rect x="6" y="2" width="1" height="1" fill="#c9c9c9"/><rect x="8" y="0" width="1" height="1" fill="#c9c9c9"/><rect x="8" y="2" width="1" height="1" fill="#c9c9c9"/><rect x="10" y="0" width="1" height="1" fill="#c9c9c9"/><rect x="10" y="2" width="1" height="1" fill="#c9c9c9"/><rect x="12" y="0" width="1" height="1" fill="#c9c9c9"/><rect x="12" y="2" width="1" height="1" fill="#c9c9c9"/></svg>
<svg style="left:1277px;top:552px;" width="18" height="18" viewBox="0 0 18 18"><rect x="0" y="0" width="8.5" height="5.5" fill="#d8d8d8"/><rect x="8" y="11" width="8.5" height="5.5" fill="#d8d8d8"/><rect x="2.5" y="3.5" width="11" height="9" fill="#7cc4f6" stroke="#363d49" stroke-width="1"/></svg>
<svg style="left:1277px;top:574px;" width="18" height="18" viewBox="0 0 18 18"><rect x="3" y="4" width="10" height="8" fill="#7cc4f6"/><rect x="-0.5" y="-0.5" width="9" height="6" fill="#d8d8d8" stroke="#363d49" stroke-width="1"/><rect x="7.5" y="10.5" width="9" height="6" fill="#d8d8d8" stroke="#363d49" stroke-width="1"/></svg>
<svg style="left:1277px;top:598px;" width="18" height="18" viewBox="0 0 18 18"><rect x="0" y="0" width="9" height="7" fill="#d8d8d8"/><rect x="5.5" y="3.5" width="11" height="9" fill="#7cc4f6" stroke="#363d49" stroke-width="1"/></svg>
<svg style="left:1277px;top:620px;" width="18" height="18" viewBox="0 0 18 18"><rect x="6" y="4" width="10" height="8" fill="#7cc4f6"/><rect x="-0.5" y="-0.5" width="10" height="8" fill="#d8d8d8" stroke="#363d49" stroke-width="1"/></svg>
<svg style="left:1278px;top:647px;" width="18" height="18" viewBox="0 0 18 18"><text x="7" y="6" font-size="7" font-weight="bold" fill="#5cb6f2" text-anchor="middle" font-family="Liberation Sans" letter-spacing="-0.3">ABC</text><path d="M2 9 H12 L16 5 V14 H11 L11 12 H2Z" fill="#d8d8d8"/></svg>
<svg style="left:1278px;top:668px;" width="18" height="18" viewBox="0 0 18 18"><rect x="0" y="0" width="12" height="9" fill="#d8d8d8"/><path d="M4.5 9 V17 M15 9 V17 M3 10.5 H17 M3 15.5 H17" stroke="#e4e4e4" stroke-width="1"/><path d="M7 14 L12 11" stroke="#5cb6f2" stroke-width="1.2"/></svg>
<div style="left:1276px;top:639px;width:19px;height:2px;background:#e0e0e0;"></div>
<div style="left:458px;top:134px;width:1px;height:553px;background:#f0f0f0;"></div>
<div style="left:31px;top:429px;width:1238px;height:1px;background:#f0f0f0;"></div>
<div style="left:450px;top:421px;width:17px;height:17px;background:#21262f;border:2px solid #f0f0f0;box-sizing:border-box"></div>
</body></html>
